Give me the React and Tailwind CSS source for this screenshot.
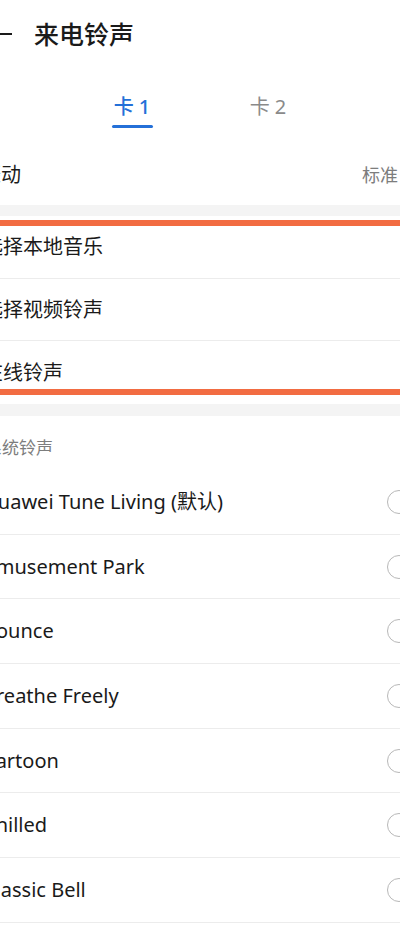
import React from 'react';

const ringtones = [
    'Huawei Tune Living (默认)',
    'Amusement Park',
    'Bounce',
    'Breathe Freely',
    'Cartoon',
    'Chilled',
    'Classic Bell',
    'Classic Dream',
];

const sources = ['选择本地音乐', '选择视频铃声', '在线铃声'];

// Radio kosong di kanan baris
const Radio = () => (
    <span className="block w-[24px] h-[24px] rounded-full border-[1.5px] border-[#b8b8b8] shrink-0" />
);

export default function App() {
    return (
        <div
            className="w-[400px] h-[931px] overflow-hidden bg-white text-[#1a1a1a]"
            style={{ fontFamily: '"Noto Sans", "Noto Sans CJK SC", sans-serif' }}
        >
            <div className="-ml-[33px] w-[460px]">
                {/* Header */}
                <div className="h-[68px] flex items-center pl-[21px]">
                    <svg width="24" height="24" viewBox="0 0 24 24" className="shrink-0">
                        <path d="M1 12h23M9 4l-8 8 8 8" fill="none" stroke="#1a1a1a" strokeWidth="2" strokeLinecap="round" strokeLinejoin="round" />
                    </svg>
                    <h1 className="ml-[22px] text-[25px] leading-[32px] font-medium">来电铃声</h1>
                </div>

                {/* Tabs */}
                <div className="flex pl-[97px] pt-[25px] pb-[17px]">
                    <div className="w-[136px] flex flex-col items-center">
                        <span className="text-[20px] leading-[28px] font-medium text-[#2470d8]">卡 1</span>
                        <span className="mt-[4px] w-[41px] h-[3px] rounded-full bg-[#2470d8]" />
                    </div>
                    <div className="w-[136px] flex flex-col items-center">
                        <span className="text-[20px] leading-[28px] text-[#8a8a8a]">卡 2</span>
                    </div>
                </div>

                {/* 振动 */}
                <div className="h-[60px] flex items-center justify-between pl-[14px] pr-[16px]">
                    <span className="text-[20px]">振动</span>
                    <div className="flex items-center gap-[5px]">
                        <span className="text-[18px] text-[#7d7d7d]">标准</span>
                        <svg width="8" height="14" viewBox="0 0 8 14">
                            <path d="M1 1l6 6-6 6" fill="none" stroke="#b0b0b0" strokeWidth="1.5" />
                        </svg>
                    </div>
                </div>

                <div className="h-[11px] bg-[#f4f4f4]" />

                {/* Sumber nada dering, dengan kotak anotasi oranye */}
                <div className="relative">
                    {sources.map((s, i) => (
                        <div
                            key={s}
                            className={`flex items-center pl-[16px] ${i === 1 ? 'h-[62px]' : 'h-[63px]'} ${i < 2 ? 'border-b border-[#ececec]' : ''}`}
                        >
                            <span className="text-[20px]">{s}</span>
                        </div>
                    ))}
                    <div className="absolute left-0 right-0 top-[4px] h-[6px] bg-[#f26c42]" />
                    <div className="absolute left-0 right-0 top-[173px] h-[6px] bg-[#f26c42]" />
                </div>

                <div className="h-[12px] bg-[#f4f4f4]" />

                {/* Sistem */}
                <div className="pl-[18px] pt-[20px] pb-[10px]">
                    <span className="block text-[17px] leading-[24px] text-[#7d7d7d]">系统铃声</span>
                </div>

                {ringtones.map(name => (
                    <div
                        key={name}
                        className="h-[64.7px] box-border border-b border-[#ececec] flex items-center justify-between pl-[16px] pr-[16px]"
                    >
                        <span className="text-[20px]">{name}</span>
                        <Radio />
                    </div>
                ))}
            </div>
        </div>
    );
}
